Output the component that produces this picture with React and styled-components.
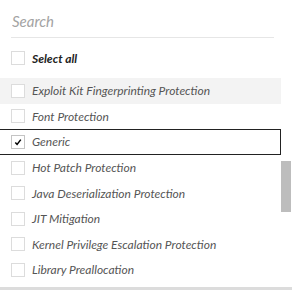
import React from "react";
import styled, { createGlobalStyle } from "styled-components";

const GlobalStyle = createGlobalStyle`
  body {
    margin: 0;
    background: #fff;
    font-family: Lato, "Open Sans", sans-serif;
  }
`;

const Panel = styled.div`
  width: 292px;
  height: 290px;
  display: flex;
  flex-direction: column;
  overflow: hidden;
  border-bottom: 3px solid #dcdcdc;
  box-sizing: border-box;
`;

const SearchBox = styled.div`
  margin: 0 18px 0 11px;
  padding-top: 11px;
  height: 26px;
  border-bottom: 1px solid #e6e6e6;
`;

const SearchInput = styled.input`
  border: none;
  outline: none;
  padding: 0 0 0 1px;
  width: 100%;
  font-family: Lato, sans-serif;
  font-style: italic;
  font-size: 15px;
  color: #444;
  background: transparent;
  &::placeholder {
    color: #a3a3a3;
  }
`;

const SelectAllRow = styled.label`
  display: flex;
  align-items: center;
  height: 40px;
  padding-left: 11px;
  gap: 7px;
  font-style: italic;
  font-weight: 700;
  font-size: 12px;
  color: #222;
`;

const Body = styled.div`
  display: flex;
  flex: 1;
  min-height: 0;
`;

const List = styled.div`
  width: 281px;
  display: flex;
  flex-direction: column;
`;

const Row = styled.div`
  display: flex;
  align-items: center;
  height: 25.6px;
  box-sizing: border-box;
  padding-left: 11px;
  gap: 7px;
  font-style: italic;
  font-size: 12px;
  color: #555;
  background: ${(p) => (p.$hover ? "#f3f3f3" : "transparent")};
  border: 1px solid ${(p) => (p.$focus ? "#222" : "transparent")};
  border-left: none;
  white-space: nowrap;
`;

const Box = styled.span`
  width: 14px;
  height: 14px;
  box-sizing: border-box;
  border: 1px solid ${(p) => (p.$checked ? "#c4c4c4" : "#dcdcdc")};
  background: #fff;
  display: flex;
  align-items: center;
  justify-content: center;
  flex-shrink: 0;
`;

const Track = styled.div`
  width: 11px;
  display: flex;
  flex-direction: column;
`;

const Thumb = styled.div`
  margin-top: 83px;
  width: 10px;
  height: 51px;
  background: #bdbdbd;
`;

const items = [
  "Exploit Kit Fingerprinting Protection",
  "Font Protection",
  "Generic",
  "Hot Patch Protection",
  "Java Deserialization Protection",
  "JIT Mitigation",
  "Kernel Privilege Escalation Protection",
  "Library Preallocation",
];

const Check = () => (
  <svg width="8" height="8" viewBox="0 0 8 8">
    <path d="M1.3 4.4 L3.1 6.4 L6.8 1.6" fill="none" stroke="#000" strokeWidth="1.5" />
  </svg>
);

const App = () => (
  <>
    <GlobalStyle />
    <Panel>
      <SearchBox>
        <SearchInput placeholder="Search" />
      </SearchBox>
      <SelectAllRow>
        <Box />
        Select all
      </SelectAllRow>
      <Body>
        <List>
          {items.map((name) => (
            <Row key={name} $hover={name.startsWith("Exploit")} $focus={name === "Generic"}>
              <Box $checked={name === "Generic"}>{name === "Generic" && <Check />}</Box>
              {name}
            </Row>
          ))}
        </List>
        <Track>
          <Thumb />
        </Track>
      </Body>
    </Panel>
  </>
);

export default App;
